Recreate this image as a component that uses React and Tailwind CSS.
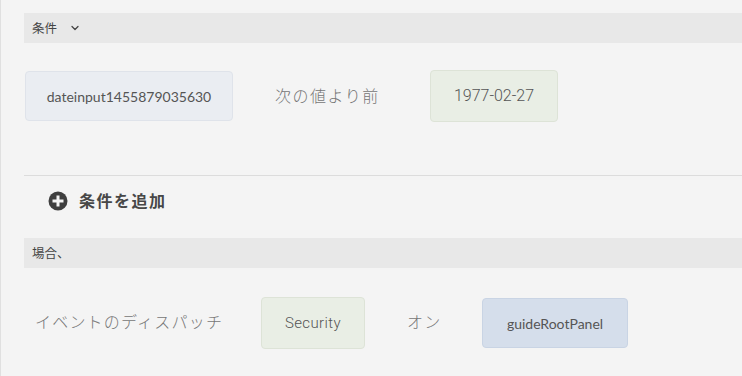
import { ChevronDown } from 'lucide-react';

const App = () => {
  return (
    <div className="w-[742px] h-[376px] overflow-hidden bg-[#f4f4f4] border-l border-[#e0e0e0] font-['Open_Sans','Noto_Sans_CJK_JP',sans-serif]">
      <div className="pl-[23px] pt-[13px]">
        {/* 条件 header */}
        <div className="h-[30px] bg-[#e8e8e8] flex items-center pl-[8px] gap-[12px] text-[12.5px] text-[#444] font-['Noto_Sans_CJK_JP',sans-serif]">
          <span>条件</span>
          <ChevronDown size={12} strokeWidth={2.5} className="text-[#444]" />
        </div>

        {/* condition row */}
        <div className="flex items-center pt-[27px] pb-[53px] border-b border-[#dcdcdc]">
          <div className="ml-[1px] w-[208px] h-[50px] bg-[#eaedf2] border border-[#dfe3ea] rounded-[4px] flex items-center justify-center text-[14px] text-[#555] font-['Lato','Noto_Sans_CJK_JP',sans-serif]">
            dateinput1455879035630
          </div>
          <div className="ml-[42px] w-[155px] text-[16px] tracking-[1.5px] text-[#767676] font-['Noto_Sans_CJK_JP',sans-serif] font-light -mt-[2px]">次の値より前</div>
          <div className="w-[128px] h-[52px] bg-[#e9eee5] border border-[#dde3d7] rounded-[4px] flex items-center justify-center text-[16px] text-[#555] font-['Roboto',sans-serif] font-light">
            1977-02-27
          </div>
        </div>

        {/* add condition */}
        <div className="h-[62px] flex items-start pt-[14px] pl-[24px] gap-[11px]">
          <svg width="20" height="20" viewBox="0 0 20 20" className="mt-[1px]">
            <circle cx="10" cy="10" r="9.5" fill="#3f3f3f" />
            <rect x="4.5" y="8.5" width="11" height="3" fill="#f4f4f4" />
            <rect x="8.5" y="4.5" width="3" height="11" fill="#f4f4f4" />
          </svg>
          <span className="text-[16px] tracking-[1.5px] font-bold text-[#474747] leading-[20px] font-['Noto_Sans_CJK_JP',sans-serif]">条件を追加</span>
        </div>

        {/* 場合、 header */}
        <div className="h-[30px] bg-[#e8e8e8] flex items-center pl-[8px] text-[12.5px] text-[#444] font-['Noto_Sans_CJK_JP',sans-serif]">
          <span>場合、</span>
        </div>

        {/* event row */}
        <div className="flex items-center pt-[29px]">
          <div className="ml-[11px] w-[226px] text-[16px] tracking-[1.2px] text-[#767676] font-['Noto_Sans_CJK_JP',sans-serif] font-light -mt-[4px]">イベントのディスパッチ</div>
          <div className="w-[104px] h-[52px] bg-[#e9eee5] border border-[#dde3d7] rounded-[4px] flex items-center justify-center text-[15px] text-[#555] tracking-[0.4px] font-['Roboto',sans-serif] font-light">
            Security
          </div>
          <div className="ml-[42px] w-[75px] text-[16px] tracking-[1.2px] text-[#767676] font-['Noto_Sans_CJK_JP',sans-serif] font-light -mt-[4px]">オン</div>
          <div className="w-[146px] h-[50px] bg-[#d5deeb] border border-[#c9d4e4] rounded-[4px] flex items-center justify-center text-[14px] text-[#555] font-['Lato','Noto_Sans_CJK_JP',sans-serif]">
            guideRootPanel
          </div>
        </div>
      </div>
    </div>
  );
};

export default App;
